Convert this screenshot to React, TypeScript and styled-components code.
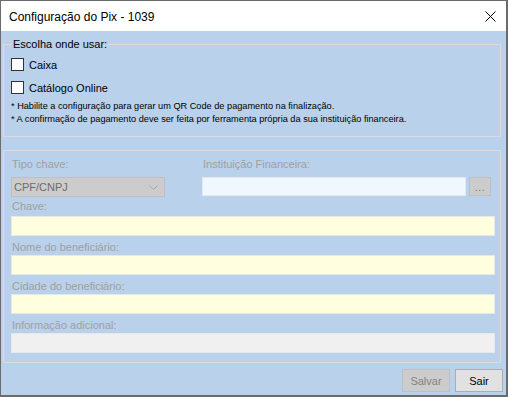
import styled, { createGlobalStyle } from 'styled-components'

const GlobalStyle = createGlobalStyle`
  html, body {
    margin: 0;
    padding: 0;
    background: #ffffff;
  }
  * { box-sizing: border-box; }
`

const Window = styled.div`
  width: 508px;
  height: 397px;
  border: 1px solid #6b6b6b;
  border-right-width: 2px;
  border-bottom-width: 2px;
  display: flex;
  flex-direction: column;
  font-family: "Liberation Sans", Arial, sans-serif;
  background: #b9d1ea;
  overflow: hidden;
`

const TitleBar = styled.div`
  height: 30px;
  flex: none;
  background: #ffffff;
  display: flex;
  align-items: center;
  justify-content: space-between;
  padding: 0 10px 0 8px;
`

const Title = styled.span`
  font-size: 12px;
  color: #000000;
  padding-top: 1px;
`

const CloseButton = styled.button`
  border: none;
  background: none;
  padding: 0;
  width: 12px;
  height: 12px;
  display: flex;
  align-items: center;
  justify-content: center;
  cursor: pointer;
`

const Body = styled.div`
  flex: 1;
  display: flex;
  flex-direction: column;
  padding: 6px 5px 0 2px;
`

const Group = styled.fieldset`
  margin: 0;
  padding: 0 7px 10px 7px;
  border: 1px solid #dcdcdc;
  min-width: 0;
`

const Legend = styled.legend`
  padding: 0 1px;
  margin-left: 1px;
  font-size: 11px;
  line-height: 14px;
  color: #000000;
`

const PlainGroup = styled.div`
  margin-top: 13px;
  border: 1px solid #dcdcdc;
  padding: 6px 5px 9px 7px;
  display: flex;
  flex-direction: column;
`

const CheckRow = styled.label<{ $top: number }>`
  display: flex;
  align-items: center;
  gap: 5px;
  margin-top: ${p => p.$top}px;
  height: 13px;
  font-size: 11px;
  color: #000000;
`

const Check = styled.input`
  appearance: none;
  margin: 0;
  width: 13px;
  height: 13px;
  border: 1px solid #333333;
  background: #ffffff;
`

const Notes = styled.div`
  margin-top: 6px;
  font-size: 9.2px;
  line-height: 13px;
  color: #000000;
`

const TopRow = styled.div`
  display: flex;
  gap: 37px;
`

const Column = styled.div<{ $width?: number }>`
  display: flex;
  flex-direction: column;
  ${p => (p.$width ? `width: ${p.$width}px;` : 'flex: 1;')}
`

const FieldLabel = styled.div<{ $top?: number }>`
  font-size: 11px;
  line-height: 14px;
  color: #a0a0a0;
  padding-left: 1px;
  margin-top: ${p => p.$top ?? 0}px;
  margin-bottom: 1px;
`

const Combo = styled.div`
  margin-top: 5px;
  height: 20px;
  background: #cccccc;
  border: 1px solid #bfbfbf;
  display: flex;
  align-items: center;
  justify-content: space-between;
  padding: 0 6px 0 2px;
  font-size: 11px;
  color: #6d6d6d;
`

const InputLine = styled.div`
  margin-top: 5px;
  margin-right: 4px;
  display: flex;
  gap: 3px;
`

const TextBox = styled.div<{ $bg: string; $h?: number; $grow?: boolean; $top?: number }>`
  height: ${p => p.$h ?? 20}px;
  background: ${p => p.$bg};
  border: 1px solid #e8e8e8;
  flex: ${p => (p.$grow ? '1' : 'none')};
  margin-top: ${p => p.$top ?? 0}px;
`

const DotsButton = styled.button`
  width: 22px;
  height: 19px;
  margin: 0;
  padding: 0 0 2px;
  background: #cccccc;
  border: 1px solid #bfbfbf;
  font-family: "Liberation Sans", Arial, sans-serif;
  font-size: 10px;
  color: #7a6d80;
  display: flex;
  align-items: flex-end;
  justify-content: center;
  letter-spacing: 0.5px;
`

const Footer = styled.div`
  display: flex;
  justify-content: flex-end;
  gap: 5px;
  margin-top: 6px;
  margin-right: -2px;
`

const FooterButton = styled.button<{ $disabled?: boolean }>`
  width: 48px;
  height: 23px;
  margin: 0;
  padding: 0;
  font-family: "Liberation Sans", Arial, sans-serif;
  font-size: 11px;
  background: ${p => (p.$disabled ? '#cccccc' : '#e1e1e1')};
  border: 1px solid ${p => (p.$disabled ? '#bfbfbf' : '#adadad')};
  color: ${p => (p.$disabled ? '#838383' : '#000000')};
`

function Field({ label, bg, top, gap }: { label: string; bg: string; top: number; gap: number }) {
  return (
    <>
      <FieldLabel $top={top}>{label}</FieldLabel>
      <TextBox $bg={bg} $top={gap} />
    </>
  )
}

export default function App() {
  return (
    <>
      <GlobalStyle />
      <Window>
        <TitleBar>
          <Title>Configuração do Pix - 1039</Title>
          <CloseButton aria-label="Fechar">
            <svg width="11" height="11" viewBox="0 0 11 11">
              <path d="M0.5 0.5 L10.5 10.5 M10.5 0.5 L0.5 10.5" stroke="#000" strokeWidth="1" />
            </svg>
          </CloseButton>
        </TitleBar>
        <Body>
          <Group>
            <Legend>Escolha onde usar:</Legend>
            <CheckRow $top={7}>
              <Check type="checkbox" />
              Caixa
            </CheckRow>
            <CheckRow $top={10}>
              <Check type="checkbox" />
              Catálogo Online
            </CheckRow>
            <Notes>
              * Habilite a configuração para gerar um QR Code de pagamento na finalização.
              <br />
              * A confirmação de pagamento deve ser feita por ferramenta própria da sua instituição financeira.
            </Notes>
          </Group>
          <PlainGroup>
            <TopRow>
              <Column $width={154}>
                <FieldLabel>Tipo chave:</FieldLabel>
                <Combo>
                  CPF/CNPJ
                  <svg width="9" height="5" viewBox="0 0 9 5">
                    <path d="M0.5 0.5 L4.5 4.5 L8.5 0.5" stroke="#a8a8a8" fill="none" strokeWidth="1" />
                  </svg>
                </Combo>
              </Column>
              <Column>
                <FieldLabel>Instituição Financeira:</FieldLabel>
                <InputLine>
                  <TextBox $bg="#f0f8ff" $h={19} $grow />
                  <DotsButton>...</DotsButton>
                </InputLine>
              </Column>
            </TopRow>
            <Field label="Chave:" bg="#ffffe0" top={2} gap={2} />
            <Field label="Nome do beneficiário:" bg="#ffffe0" top={4} gap={0} />
            <Field label="Cidade do beneficiário:" bg="#ffffe0" top={4} gap={0} />
            <Field label="Informação adicional:" bg="#f0f0f0" top={4} gap={0} />
          </PlainGroup>
          <Footer>
            <FooterButton $disabled>Salvar</FooterButton>
            <FooterButton>Sair</FooterButton>
          </Footer>
        </Body>
      </Window>
    </>
  )
}
